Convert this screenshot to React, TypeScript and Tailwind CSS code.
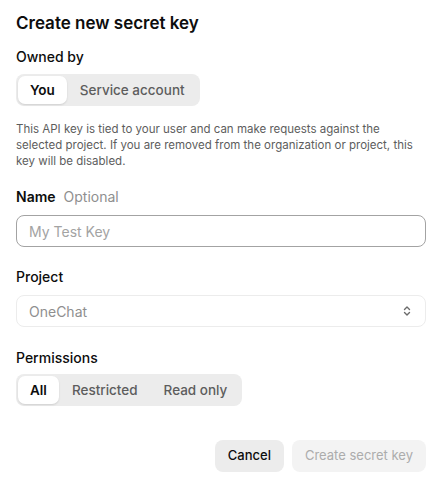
import React, { useState } from 'react';

const Segmented = ({ options, value, onChange }: { options: string[]; value: string; onChange: (v: string) => void }) => (
  <div className="inline-flex h-8 items-center rounded-lg bg-[#ececec] p-0.5">
    {options.map(o => (
      <button
        key={o}
        onClick={() => onChange(o)}
        className={`h-7 rounded-[7px] text-[13.5px] ${value === o ? 'bg-white px-3 font-semibold text-[#0d0d0d] shadow-[0_1px_2px_rgba(0,0,0,0.12)]' : 'px-[13px] font-medium text-[#5d5d5d]'}`}
      >
        {o}
      </button>
    ))}
  </div>
);

export default function App() {
  const [owner, setOwner] = useState('You');
  const [perm, setPerm] = useState('All');
  return (
    <div className="h-[483px] w-[442px] bg-white px-4 pt-[10px] text-[#0d0d0d]" style={{ fontFamily: 'Inter, "Noto Sans", sans-serif' }}>
      <h2 className="text-[17px] font-semibold leading-[26px]">Create new secret key</h2>

      <div className="mt-[11px] text-[14px] font-medium leading-5">Owned by</div>
      <div className="mt-[7px]">
        <Segmented options={['You', 'Service account']} value={owner} onChange={setOwner} />
      </div>

      <p className="mt-[15px] text-[11.5px] leading-4 text-[#5d5d5d]">
        This API key is tied to your user and can make requests against the selected project. If you are removed from the organization or project, this key will be disabled.
      </p>

      <div className="mt-[18px] flex items-baseline gap-2 text-[14px] leading-5">
        <span className="font-semibold">Name</span>
        <span className="text-[#8f8f8f]">Optional</span>
      </div>
      <input
        placeholder="My Test Key"
        className="mt-[8px] h-8 w-full rounded-lg border border-[#a3a3a3] px-3 text-[14px] placeholder:text-[#a3a3a3] focus:outline-none"
      />

      <div className="mt-[20px] text-[14px] font-medium leading-5">Project</div>
      <div className="mt-2 flex h-8 w-full items-center justify-between rounded-lg border border-[#ececec] px-3 text-[14px] text-[#8f8f8f]">
        <span>OneChat</span>
        <svg width="12" height="12" viewBox="0 0 12 12" fill="none" stroke="#6b6b6b" strokeWidth="1.4" strokeLinecap="round" strokeLinejoin="round">
          <path d="M3.5 4.5 6 2l2.5 2.5M3.5 7.5 6 10l2.5-2.5" />
        </svg>
      </div>

      <div className="mt-[21px] text-[14px] font-medium leading-5">Permissions</div>
      <div className="mt-[6px]">
        <Segmented options={['All', 'Restricted', 'Read only']} value={perm} onChange={setPerm} />
      </div>

      <div className="mt-[34px] flex justify-end gap-2">
        <button className="h-8 rounded-lg bg-[#ececec] px-[13px] text-[13px] font-medium text-[#0d0d0d]">Cancel</button>
        <button disabled className="h-8 rounded-lg bg-[#f3f3f3] px-[13px] text-[13px] text-[#acacac]">Create secret key</button>
      </div>
    </div>
  );
}
